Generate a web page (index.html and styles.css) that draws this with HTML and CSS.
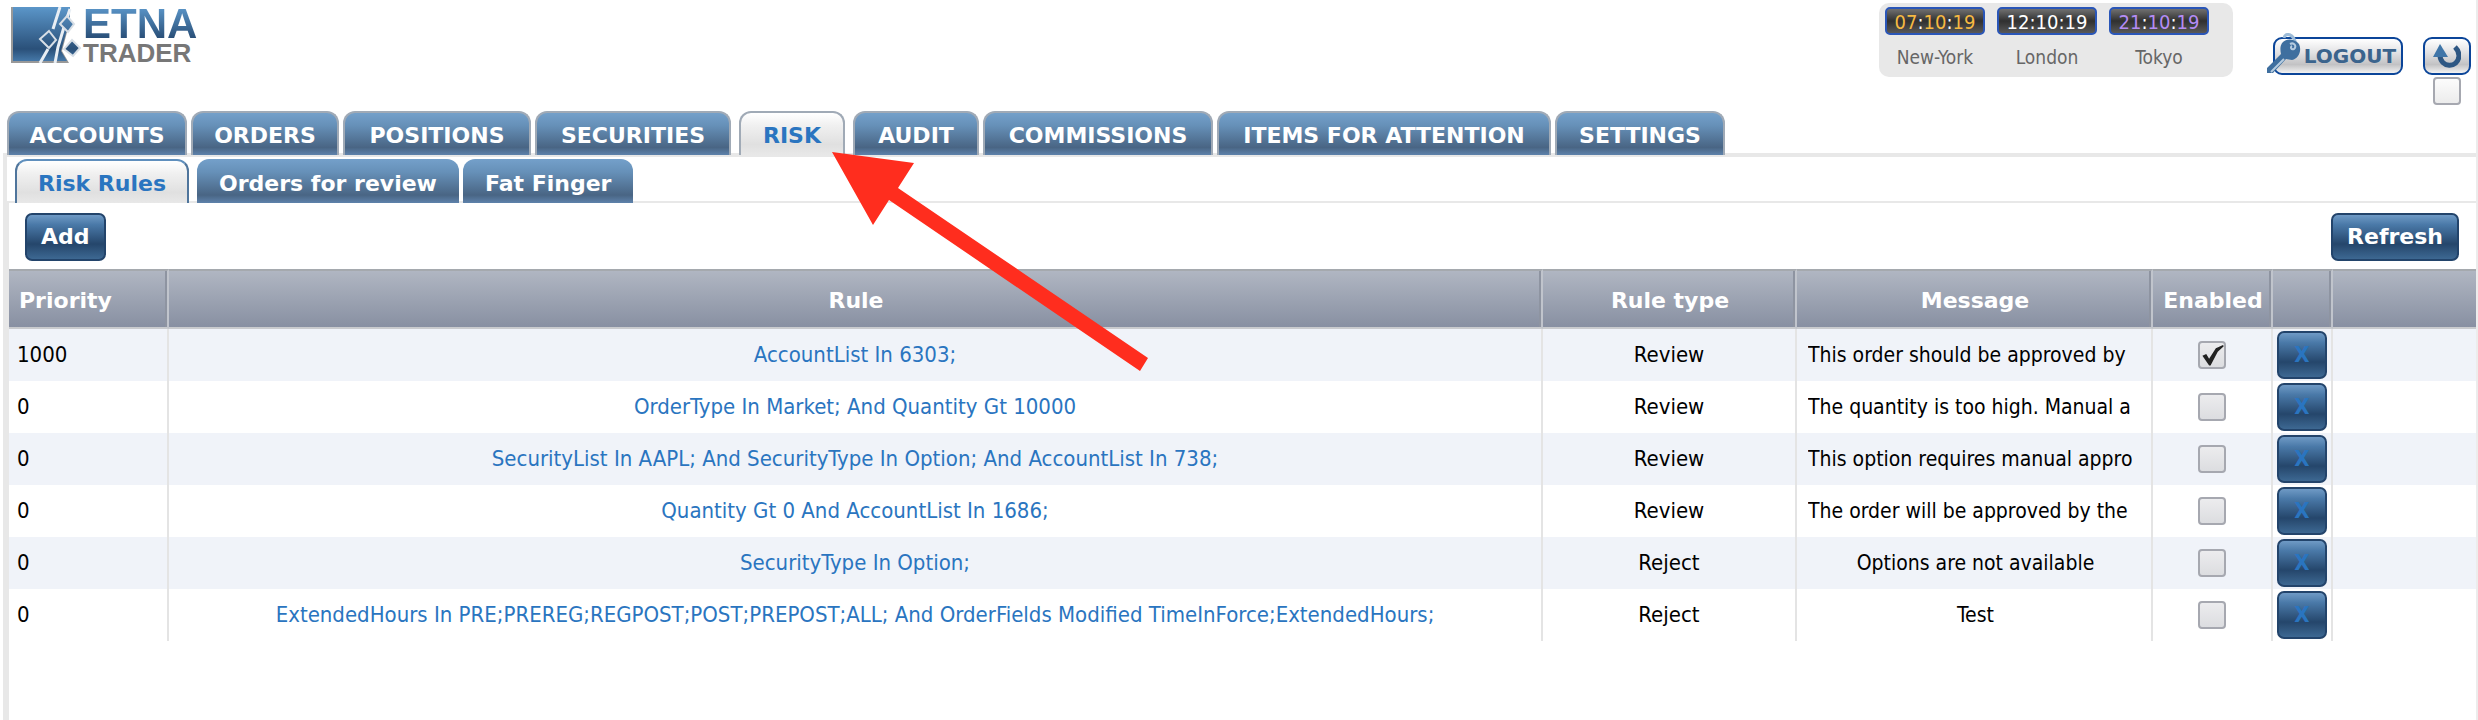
FILE: index.html
```
<!DOCTYPE html>
<html lang="en">
<head>
<meta charset="utf-8">
<title>ETNA Trader - Risk Rules</title>
<link rel="stylesheet" href="styles.css">
</head>
<body>
<header class="topbar">
  <a class="logo" href="#" aria-label="ETNA Trader">
    <svg class="logo-mark" viewBox="0 0 70 56" aria-hidden="true">
      <defs>
        <linearGradient id="steel" x1="0" y1="0" x2="0" y2="56" gradientUnits="userSpaceOnUse">
          <stop offset="0" stop-color="#5b96c9"/><stop offset=".75" stop-color="#2a5079"/><stop offset="1" stop-color="#4a7fb0"/>
        </linearGradient>
      </defs>
      <path d="M0 0H59L59 14L51 44L58 56H0z" fill="#999"/>
      <path d="M2 0H59L59 12L50 44L56 54H2z" fill="url(#steel)"/>
      <path d="M49 0L42 22M37 42L29 56M59 2L53 20L47 40L44 56" fill="none" stroke="#e8eef4" stroke-width="3"/>
      <path d="M38 24L45 33L38 41L29 32zM56 9L63 17L57 25L49 17zM61 33L69 41L62 49L53 42z" fill="url(#steel)" stroke="#d8dfe6" stroke-width="2"/>
    </svg>
    <span class="logo-text"><span class="logo-etna">ETNA</span><span class="logo-trader">TRADER</span></span>
  </a>
  <div class="clocks">
    <div class="clock"><div class="clock-face gold">07<i>:</i>10<i>:</i>19</div><div class="clock-city">New-York</div></div>
    <div class="clock"><div class="clock-face white">12<i>:</i>10<i>:</i>19</div><div class="clock-city">London</div></div>
    <div class="clock"><div class="clock-face violet">21<i>:</i>10<i>:</i>19</div><div class="clock-city">Tokyo</div></div>
  </div>
  <div class="session">
    <button class="pill logout" type="button">
      <svg class="key" viewBox="0 0 34 40" aria-hidden="true">
        <path d="M17 5C18 -1 27 0 29 12" fill="none" stroke="#9dbcd8" stroke-width="3"/>
        <path d="M16 9C20 5 28 6 32 11C35 17 32 26 25 27L19 26L6 40H0V35L14 21C13 16 13 12 16 9z" fill="#3f6f9f"/>
        <path d="M23 11C27 9 30 13 27 16C24 17 23 14 25 13M17 26L4 39" fill="none" stroke="#b5cbe0" stroke-width="2"/>
      </svg>
      LOGOUT
    </button>
    <button class="pill reload" type="button" aria-label="Reload">
      <svg class="reload-icon" viewBox="0 0 28 26" aria-hidden="true">
        <path d="M7 12C7 25 25 26 26 13Q26 8 22 4" fill="none" stroke="#2e5783" stroke-width="5"/>
        <path d="M0 14L7 1L15 14z" fill="#3f75a8"/>
      </svg>
    </button>
    <input class="check top-check" type="checkbox" aria-label="Auto reload">
  </div>
</header>

<nav class="tabs">
  <a class="tab w-accounts" href="#">ACCOUNTS</a>
  <a class="tab w-orders" href="#">ORDERS</a>
  <a class="tab w-positions" href="#">POSITIONS</a>
  <a class="tab w-securities" href="#">SECURITIES</a>
  <a class="tab w-risk active" href="#">RISK
    <svg class="pointer" viewBox="0 0 318 220" aria-hidden="true"><path d="M0 0L82 11L66 36L316 206L308 219L57 48L41 73z" fill="#ff2d1e"/></svg>
  </a>
  <a class="tab w-audit" href="#">AUDIT</a>
  <a class="tab w-commissions" href="#">COMMISSIONS</a>
  <a class="tab w-items" href="#">ITEMS FOR ATTENTION</a>
  <a class="tab w-settings" href="#">SETTINGS</a>
</nav>

<main class="panel">
  <nav class="subtabs">
    <a class="subtab active" href="#">Risk Rules</a>
    <a class="subtab" href="#">Orders for review</a>
    <a class="subtab" href="#">Fat Finger</a>
  </nav>
  <section class="content">
    <div class="toolbar">
      <button class="btn" type="button">Add</button>
      <button class="btn" type="button">Refresh</button>
    </div>
    <table class="rules">
      <colgroup><col class="c-priority"><col><col class="c-type"><col class="c-message"><col class="c-enabled"><col class="c-delete"><col class="c-rest"></colgroup>
      <thead>
        <tr><th class="left">Priority</th><th>Rule</th><th>Rule type</th><th>Message</th><th>Enabled</th><th></th><th></th></tr>
      </thead>
      <tbody>
        <tr><td class="left">1000</td><td><a href="#">AccountList In 6303;</a></td><td>Review</td><td><div class="message">This order should be approved by</div></td><td><input class="check" type="checkbox" aria-label="Enabled" checked></td><td><button class="btn x" type="button">X</button></td><td></td></tr>
        <tr><td class="left">0</td><td><a href="#">OrderType In Market; And Quantity Gt 10000</a></td><td>Review</td><td><div class="message">The quantity is too high. Manual a</div></td><td><input class="check" type="checkbox" aria-label="Enabled"></td><td><button class="btn x" type="button">X</button></td><td></td></tr>
        <tr><td class="left">0</td><td><a href="#">SecurityList In AAPL; And SecurityType In Option; And AccountList In 738;</a></td><td>Review</td><td><div class="message">This option requires manual appro</div></td><td><input class="check" type="checkbox" aria-label="Enabled"></td><td><button class="btn x" type="button">X</button></td><td></td></tr>
        <tr><td class="left">0</td><td><a href="#">Quantity Gt 0 And AccountList In 1686;</a></td><td>Review</td><td><div class="message">The order will be approved by the</div></td><td><input class="check" type="checkbox" aria-label="Enabled"></td><td><button class="btn x" type="button">X</button></td><td></td></tr>
        <tr><td class="left">0</td><td><a href="#">SecurityType In Option;</a></td><td>Reject</td><td><div class="message center">Options are not available</div></td><td><input class="check" type="checkbox" aria-label="Enabled"></td><td><button class="btn x" type="button">X</button></td><td></td></tr>
        <tr><td class="left">0</td><td><a href="#">ExtendedHours In PRE;PREREG;REGPOST;POST;PREPOST;ALL; And OrderFields Modified TimeInForce;ExtendedHours;</a></td><td>Reject</td><td><div class="message center">Test</div></td><td><input class="check" type="checkbox" aria-label="Enabled"></td><td><button class="btn x" type="button">X</button></td><td></td></tr>
      </tbody>
    </table>
  </section>
</main>
</body>
</html>
```
FILE: styles.css
```
* { box-sizing: border-box; }
body {
  margin: 0;
  min-height: 100vh;
  display: flex;
  flex-direction: column;
  background: #fff;
  border-right: 2px solid #ececec;
  font: 22px/28px "DejaVu Sans Condensed", "Noto Sans", sans-serif;
  color: #000;
}
a { text-decoration: none; color: #2a75c0; }
button { font: inherit; cursor: pointer; }

.topbar { display: flex; align-items: flex-start; height: 111px; padding-right: 5px; }
.logo { display: flex; gap: 2px; margin: 7px auto 0 11px; }
.logo-mark { width: 70px; height: 56px; }
.logo-text { display: flex; flex-direction: column; font-family: "Liberation Sans", sans-serif; font-weight: bold; }
.logo-etna {
  font-size: 42px; line-height: 34px;
  background: linear-gradient(#5b96c9, #2a5079 90%);
  -webkit-background-clip: text; background-clip: text; color: transparent;
}
.logo-trader { font-size: 26px; line-height: 24px; color: #777; }

.clocks {
  display: flex; gap: 12px;
  width: 354px; height: 74px;
  margin: 3px 40px 0 0; padding: 4px 6px;
  border-radius: 10px; background: #e8e8e8;
}
.clock { width: 100px; text-align: center; }
.clock-face {
  height: 28px; border: 2px solid #2a56b8; border-radius: 5px;
  background: linear-gradient(#707070, #303030 50%, #585858);
  font-size: 20px; line-height: 26px;
}
.clock-face i { font-style: normal; color: #fff; }
.gold { color: #f5b942; }
.white { color: #fff; }
.violet { color: #b48cf5; }
.clock-city { margin-top: 9px; font-size: 19px; line-height: 26px; color: #666; }

.session {
  display: grid; grid-template-columns: 130px 48px;
  column-gap: 20px; row-gap: 2px; margin-top: 37px;
  justify-items: center;
}
.pill {
  position: relative; width: 100%; height: 38px; padding: 0;
  border: 2px solid #0b4599; border-radius: 9px;
  background: linear-gradient(#fff, #e2e2e4 40%, #c2c2c4 75%, #f2f2f2);
}
.logout { padding-left: 24px; font: bold 20px/34px "DejaVu Sans", sans-serif; color: #3b648d; }
.key { position: absolute; left: -8px; top: -6px; width: 34px; height: 40px; }
.reload-icon { display: block; width: 28px; height: 26px; margin: 0 auto; }

.check {
  appearance: none; display: block; width: 28px; height: 28px; margin: 0 auto;
  border: 2px solid #a6a8b0; border-radius: 4px;
  background: linear-gradient(#ececee, #dcdde0);
}
.top-check { grid-column: 2; background: linear-gradient(#fcfcfc, #ececec); }
.check:checked::before {
  content: ""; display: block; width: 24px; height: 24px; background: #222;
  clip-path: polygon(10% 53%, 26% 46%, 38% 66%, 66% 22%, 96% 8%, 99% 14%, 74% 36%, 44% 94%, 38% 94%);
}

.tabs { display: flex; gap: 4px; height: 44px; margin-bottom: -2px; padding-left: 7px; position: relative; z-index: 1; }
.tab, .subtab {
  height: 44px;
  border-style: solid; border-radius: 12px 12px 0 0;
  background: linear-gradient(#74a0ca, #6690b8 30%, #496584 82%, #5e82ab);
  font: bold 22px/46px "DejaVu Sans", sans-serif;
  color: #fff; white-space: nowrap; text-align: center;
}
.tab { border-color: #a0aab6; border-width: 2px 2px 0; position: relative; }
.w-accounts { width: 180px; }
.w-orders { width: 148px; }
.w-positions { width: 188px; }
.w-securities { width: 196px; }
.w-risk { width: 106px; }
.w-audit { width: 126px; }
.w-commissions { width: 230px; }
.w-items { width: 334px; }
.w-settings { width: 170px; }
.subtab { border-width: 0; padding: 0 22px; line-height: 50px; }
.tab.active, .subtab.active {
  background: linear-gradient(#fff, #f0f0f0 30%, #e0e0e0 75%, #e8e8e8);
  color: #2a75c0;
}
.tab.active { margin: 0 4px; }
.subtab.active { border-width: 2px 2px 0; border-color: #5f8fbd #4f759c; padding: 0 21px; margin-right: 4px; line-height: 46px; }
.pointer { position: absolute; z-index: 2; left: 91px; top: 39px; width: 318px; height: 220px; }

.panel {
  flex: 1; display: flex; flex-direction: column;
  margin-left: 3px; border-left: 4px solid #e8e8e8; border-top: 4px solid #e8e8e8;
}
.subtabs {
  display: flex; gap: 4px; padding: 2px 0 0 8px; height: 46px;
  background: linear-gradient(#e8e8e8, #e8e8e8) bottom / 100% 2px no-repeat;
}
.content { flex: 1; border-left: 2px solid #e8e8e8; }
.toolbar { display: flex; justify-content: space-between; align-items: center; height: 66px; padding: 2px 17px 0 16px; }
.btn {
  height: 48px; padding: 0 14px;
  border: 2px solid #23446b; border-radius: 7px;
  background: linear-gradient(#6f9ac5, #4a79a8 22%, #25466b 66%, #3d6892);
  font: bold 22px/44px "DejaVu Sans", sans-serif; color: #fff;
}

.rules { width: 100%; table-layout: fixed; border-collapse: separate; border-spacing: 0; }
.c-priority { width: 160px; }
.c-type { width: 254px; }
.c-message { width: 356px; }
.c-enabled { width: 120px; }
.c-delete { width: 60px; }
.c-rest { width: 143px; }
th {
  height: 60px; padding: 4px 0 0 2px;
  border-top: 2px solid #a5a9ae; border-bottom: 2px solid #c9cbce;
  border-right: 2px solid #c0c4cc;
  background: linear-gradient(#b0b6c2, #8890a2);
  box-shadow: inset -2px 0 #8e94a1;
  font: bold 22px/28px "DejaVu Sans", sans-serif; color: #fff;
}
td { height: 52px; padding: 0; border-right: 2px solid #e4e4e4; text-align: center; }
th:last-child, td:last-child { border-right: 0; box-shadow: none; }
tbody tr:nth-child(odd) { background: #f0f3f9; }
.left { text-align: left; padding-left: 8px; }
th.left { padding-left: 10px; }
.message { margin: 0 8px 0 11px; overflow: hidden; white-space: nowrap; text-align: left; font-size: 21px; }
.message.center { text-align: center; }
.x { display: block; width: 50px; margin: 0 auto; padding: 0; color: #2a75c0; font-family: "DejaVu Sans Condensed", sans-serif; }
```
